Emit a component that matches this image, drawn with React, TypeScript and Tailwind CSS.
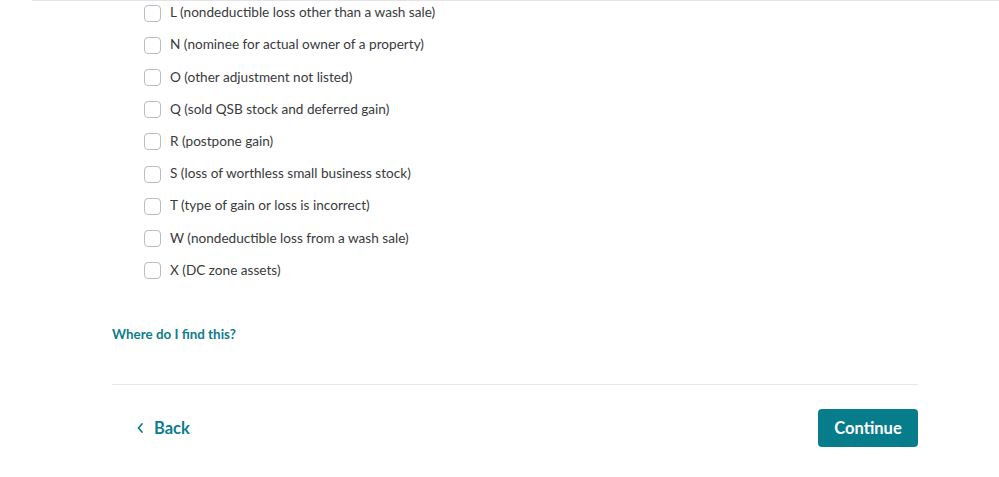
import React from "react";

const items = [
  "L (nondeductible loss other than a wash sale)",
  "N (nominee for actual owner of a property)",
  "O (other adjustment not listed)",
  "Q (sold QSB stock and deferred gain)",
  "R (postpone gain)",
  "S (loss of worthless small business stock)",
  "T (type of gain or loss is incorrect)",
  "W (nondeductible loss from a wash sale)",
  "X (DC zone assets)",
];

export default function App() {
  return (
    <div className="w-[999px] h-[477px] bg-white overflow-hidden" style={{ fontFamily: "Lato, 'Noto Sans', sans-serif" }}>
      <div className="ml-[32px] h-px bg-[#e3e3e8]" />
      <div className="ml-[112px] w-[806px]">
        <div className="pl-[32px] mt-[-4px] flex flex-col">
          {items.map((t) => (
            <label key={t} className="flex items-center h-[32.2px]">
              <span className="w-[17px] h-[17px] border border-[#b9bcc2] rounded-[4px] bg-white shrink-0" />
              <span className="ml-[9px] text-[13.6px] text-[#393a3d] leading-none">{t}</span>
            </label>
          ))}
        </div>
        <div className="mt-[41px] text-[13.4px] font-bold text-[#0d7c8c] leading-none">Where do I find this?</div>
        <div className="mt-[43px] h-px bg-[#e6e6ea]" />
        <div className="mt-[24px] flex items-center justify-between">
          <button className="flex items-center ml-[24px] text-[#0d7c8c] text-[16.5px] font-bold">
            <svg width="10" height="12" viewBox="0 0 10 12" className="mr-[8px]">
              <path d="M6 2 L2.5 6 L6 10" fill="none" stroke="#0d7c8c" strokeWidth="1.8" strokeLinecap="round" strokeLinejoin="round" />
            </svg>
            Back
          </button>
          <button className="w-[100px] h-[38px] rounded-[4px] bg-[#077c8b] text-white text-[16.5px] font-bold">Continue</button>
        </div>
      </div>
    </div>
  );
}
